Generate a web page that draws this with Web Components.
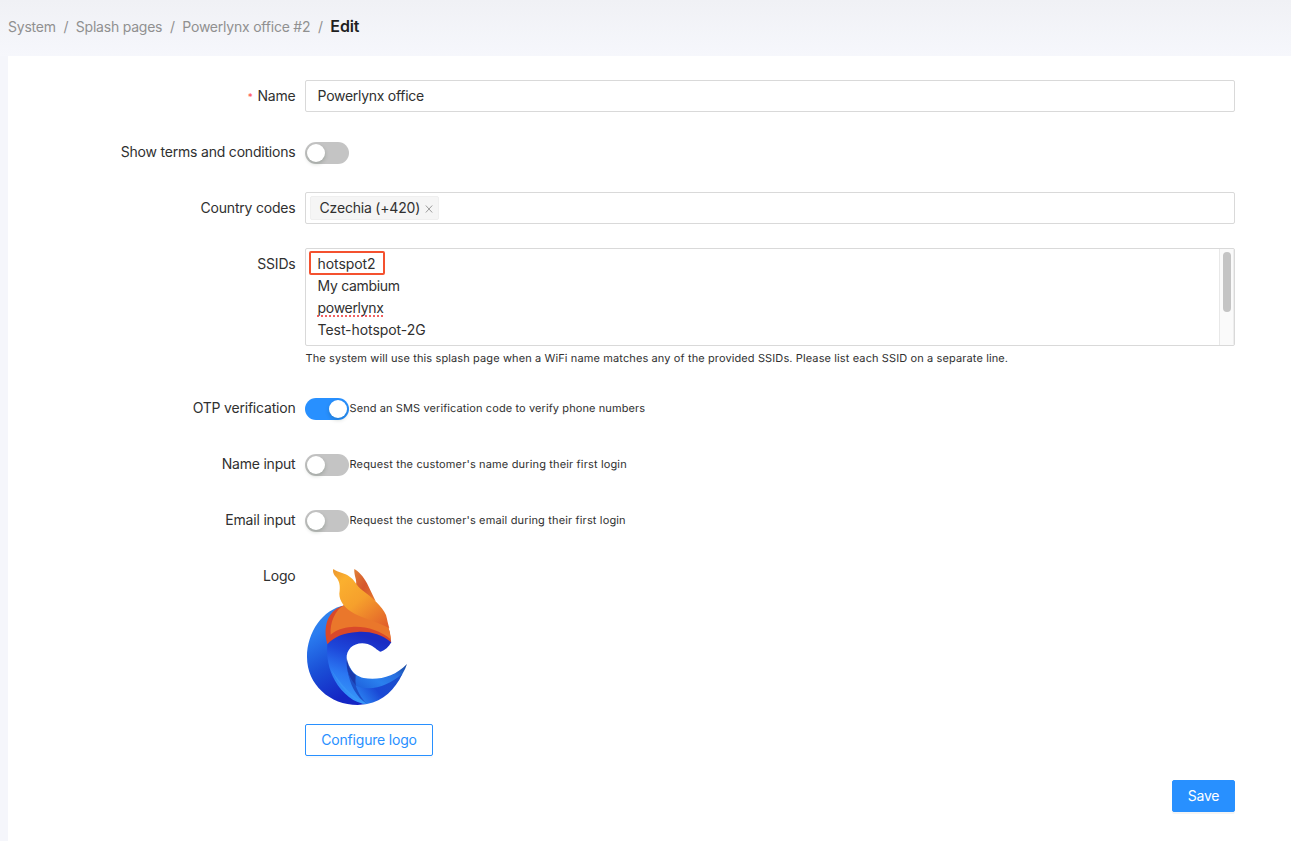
<!DOCTYPE html>
<html lang="en">
<head>
<meta charset="utf-8">
<title>Edit splash page</title>
<style>
html,body{margin:0;height:100%}
body{font:14px/22px Inter,"Liberation Sans",sans-serif;letter-spacing:-.2px;color:#303030;background:#f5f6fb;overflow:hidden}
</style>
</head>
<body>
<splash-page></splash-page>
<script>
const define = (name, html, setup) => {
  const tpl = document.createElement('template');
  tpl.innerHTML = html;
  customElements.define(name, class extends HTMLElement {
    connectedCallback() {
      if (this.shadowRoot) return;
      this.attachShadow({ mode: 'open' }).append(tpl.content.cloneNode(true));
      if (setup) setup(this, this.shadowRoot);
    }
  });
};

define('crumb-bar', `
<style>
:host{display:flex;box-sizing:border-box;height:56px;padding:16px 8px 18px;white-space:nowrap;color:#909090;letter-spacing:-.22px;background:linear-gradient(#f0f1f5,#f6f7fc)}
.sep{margin:0 7.6px}
b{font-weight:600;font-size:16px;line-height:20px;color:#1f1f1f;letter-spacing:-.1px}
</style>
<span>System</span><span class="sep">/</span><span>Splash pages</span><span class="sep">/</span><span>Powerlynx office #2</span><span class="sep">/</span><b>Edit</b>`);

define('form-row', `
<style>
:host{display:grid;grid-template-columns:287.5px 930px;column-gap:9.5px;min-height:32px}
.label{text-align:right;line-height:32px;white-space:nowrap}
.req{color:#ff4d4f;font-size:10px;line-height:1;margin-right:5px;display:none}
:host([required]) .req{display:inline}
.field{min-width:0}
</style>
<div class="label"><span class="req">*</span><span class="t"></span></div><div class="field"><slot></slot></div>`,
(el, r) => { r.querySelector('.t').textContent = el.getAttribute('label'); });

define('text-box', `
<style>
:host{display:flex;align-items:center;box-sizing:border-box;height:32px;border:1px solid #d9d9d9;border-radius:2px;background:#fff;padding:0 11.6px;letter-spacing:-.28px}
:host([tags]){padding:0 4px;letter-spacing:-.2px}
</style><slot></slot>`);

define('tag-chip', `
<style>
:host{display:flex;align-items:center;box-sizing:border-box;height:24px;width:129px;padding:0 5px 0 8.6px;border:1px solid #efefef;border-radius:2px;background:#f5f5f5;justify-content:space-between;white-space:nowrap}
svg{display:block;margin-top:2px}
</style><span><slot></slot></span><svg width="8" height="8" viewBox="0 0 8 8" fill="none" stroke="#929292" stroke-width=".9"><path d="M.8.5 7.2 7.5M7.2.5.8 7.5"/></svg>`);

define('ssid-area', `
<style>
:host{display:flex;box-sizing:border-box;height:98px;border:1px solid #d9d9d9;border-radius:2px;overflow:hidden}
.lines{flex:1;padding:4px 11.6px}
.lines div{height:22px}
.hit{position:relative;letter-spacing:-.08px}
.hit::after{content:"";position:absolute;left:-8.4px;top:-1.8px;width:72px;height:19.4px;border:2px solid #f4512f;border-radius:2px}
.my{letter-spacing:-.32px}
.sp{letter-spacing:-.32px;text-decoration:underline dotted #f06060 2px;text-underline-offset:2px;text-decoration-skip-ink:none}
.test{letter-spacing:-.07px}
.bar{box-sizing:border-box;width:15px;border-left:1px solid #e8e8e8;border-right:1px solid #ededed;background:#fafafa;padding:3px 2px 0 3px}
.thumb{height:60px;width:8px;border-radius:4px;background:#c4c4c4}
</style>
<div class="lines"><div class="hit">hotspot2</div><div class="my">My cambium</div><div><span class="sp">powerlynx</span></div><div class="test">Test-hotspot-2G</div></div>
<div class="bar"><div class="thumb"></div></div>`);

define('help-text', `
<style>:host{display:block;font-size:11px;line-height:22px;letter-spacing:.115px;white-space:nowrap;text-rendering:geometricPrecision}</style><slot></slot>`);

define('toggle-line', `
<style>
:host{display:flex;height:32px}
i{box-sizing:border-box;width:44px;height:22px;border-radius:11px;background:#c4c4c4;margin-top:6px;padding:2px;display:flex}
i::before{content:"";width:18px;height:18px;border-radius:50%;background:#fff;box-shadow:0 2px 4px rgba(0,35,11,.2)}
:host([on]) i{background:#2890ff;justify-content:flex-end}
help-text{line-height:32px;margin-left:.5px;letter-spacing:.15px}
:host([on]) help-text{letter-spacing:.1px}
</style><i></i><help-text><slot></slot></help-text>`);

define('brand-logo', `
<style>:host{display:block;width:104px;height:140px}svg{display:block}</style>
<svg width="104" height="140" viewBox="30 24 312 420">
<defs>
<linearGradient id="l" x1="0" y1="0" x2=".35" y2="1"><stop offset="0" stop-color="#3a8cea"/><stop offset=".3" stop-color="#2a7cf0"/><stop offset=".65" stop-color="#1a4ed6"/><stop offset="1" stop-color="#1426c4"/></linearGradient>
<linearGradient id="m" gradientUnits="userSpaceOnUse" x1="200" y1="225" x2="130" y2="420"><stop offset="0" stop-color="#1b2cc4"/><stop offset=".3" stop-color="#1d47da"/><stop offset=".62" stop-color="#2b77f2"/><stop offset="1" stop-color="#389cfb"/></linearGradient>
<linearGradient id="s" x1="0" y1=".7" x2="1" y2="0"><stop offset="0" stop-color="#1f62dc"/><stop offset=".35" stop-color="#2a80ee"/><stop offset=".65" stop-color="#286fe0"/><stop offset="1" stop-color="#154092"/></linearGradient>
<linearGradient id="b" x1="0" y1=".5" x2="1" y2="0"><stop offset="0" stop-color="#2878ec"/><stop offset=".35" stop-color="#1a48d5"/><stop offset="1" stop-color="#1b50ca"/></linearGradient>
<linearGradient id="o" x1=".1" y1="0" x2=".9" y2="1"><stop offset="0" stop-color="#ee9c30"/><stop offset=".15" stop-color="#fbb02f"/><stop offset=".5" stop-color="#f6a02c"/><stop offset="1" stop-color="#e2602a"/></linearGradient>
<linearGradient id="e" x1="0" y1="0" x2="1" y2="1"><stop offset="0" stop-color="#e08038"/><stop offset=".5" stop-color="#d6562b"/><stop offset="1" stop-color="#e67b2e"/></linearGradient>
</defs>
<path fill="url(#l)" d="M150 136C82 148 36 218 36 291C36 374 105 435 188 435L216 432L130 255Z"/>
<path fill="url(#m)" d="M97 252L110 215L190 195L278 215L289 247C281 261 270 271 257 275C246 272 239 259 218 252C182 243 153 264 155 297C158 347 177 394 216 432C178 431 142 400 120 362C100 326 94 290 97 252Z"/>
<path fill="url(#s)" d="M158 306C170 342 190 350 206 354C250 362 300 350 336 312Q331 328 321 344C300 372 270 386 235 388C214 391 197 386 180 377Z"/>
<path fill="#1b3aab" d="M155 293C160 318 168 334 182 345Q180 362 183 380C162 358 153 330 155 293Z"/>
<path fill="#1d4fc6" d="M158 332C163 350 172 364 183 376C190 398 200 418 216 432C183 410 164 372 158 332Z"/>
<path fill="url(#b)" d="M182 377C230 396 279 377 322 342C300 389 265 423 216 432C199 415 190 398 182 377Z"/>
<path fill="#3b9efa" d="M108 328C126 365 154 407 205 433L216 432C170 413 136 370 108 328Z" opacity=".5"/>
<path fill="#d9482a" d="M97 253C86 215 92 178 113 156C126 143 142 136 159 135L277 196Q286 215 288 247C260 222 221 213 187 216C146 219 119 229 97 253Z"/>
<path fill="#ea772b" d="M107 224C104 188 120 149 149 134L278 196Q286 215 288 239C255 210 210 198 170 201C144 203 124 210 107 224Z"/>
<path fill="url(#e)" d="M178 27C191 34 205 49 216 70L242 124L217 112L183 75C187 60 176 45 178 27Z"/>
<path fill="url(#o)" d="M115 27C130 38 148 38 164 50C178 58 184 77 202 91C230 112 262 139 273 165C277 180 279 192 283 205C258 190 214 178 180 162C148 144 133 123 133 101C137 76 133 60 120 48C115 41 112 33 115 27Z"/>
</svg>`);

define('ui-button', `
<style>
:host{display:flex;align-items:center;justify-content:center;box-sizing:border-box;height:32px;width:128px;border:1px solid #2890ff;border-radius:2px;color:#2890ff;background:#fff;box-shadow:0 2px 0 rgba(0,0,0,.02);white-space:nowrap}
:host([primary]){width:63px;color:#fff;background:#2890ff;box-shadow:0 2px 0 rgba(0,0,0,.045)}
</style><slot></slot>`);

define('splash-page', `
<style>
:host{display:flex;flex-direction:column;height:841px}
main{flex:1;margin-left:8px;background:#fff;padding:24px 56px 29px 0;display:flex;flex-direction:column;gap:24px}
.help{margin-top:1px;height:23px;margin-bottom:-2px}
help-text{margin-left:.5px}
brand-logo{margin:8px 0 16px}
.foot{display:flex;justify-content:flex-end}
</style>
<crumb-bar></crumb-bar>
<main>
<form-row label="Name" required><text-box>Powerlynx office</text-box></form-row>
<form-row label="Show terms and conditions"><toggle-line></toggle-line></form-row>
<form-row label="Country codes"><text-box tags><tag-chip>Czechia (+420)</tag-chip></text-box></form-row>
<form-row label="SSIDs"><ssid-area></ssid-area><div class="help"><help-text>The system will use this splash page when a WiFi name matches any of the provided SSIDs. Please list each SSID on a separate line.</help-text></div></form-row>
<form-row label="OTP verification"><toggle-line on>Send an SMS verification code to verify phone numbers</toggle-line></form-row>
<form-row label="Name input"><toggle-line>Request the customer's name during their first login</toggle-line></form-row>
<form-row label="Email input"><toggle-line>Request the customer's email during their first login</toggle-line></form-row>
<form-row label="Logo"><brand-logo></brand-logo><ui-button>Configure logo</ui-button></form-row>
<div class="foot"><ui-button primary>Save</ui-button></div>
</main>`);
</script>
</body>
</html>
